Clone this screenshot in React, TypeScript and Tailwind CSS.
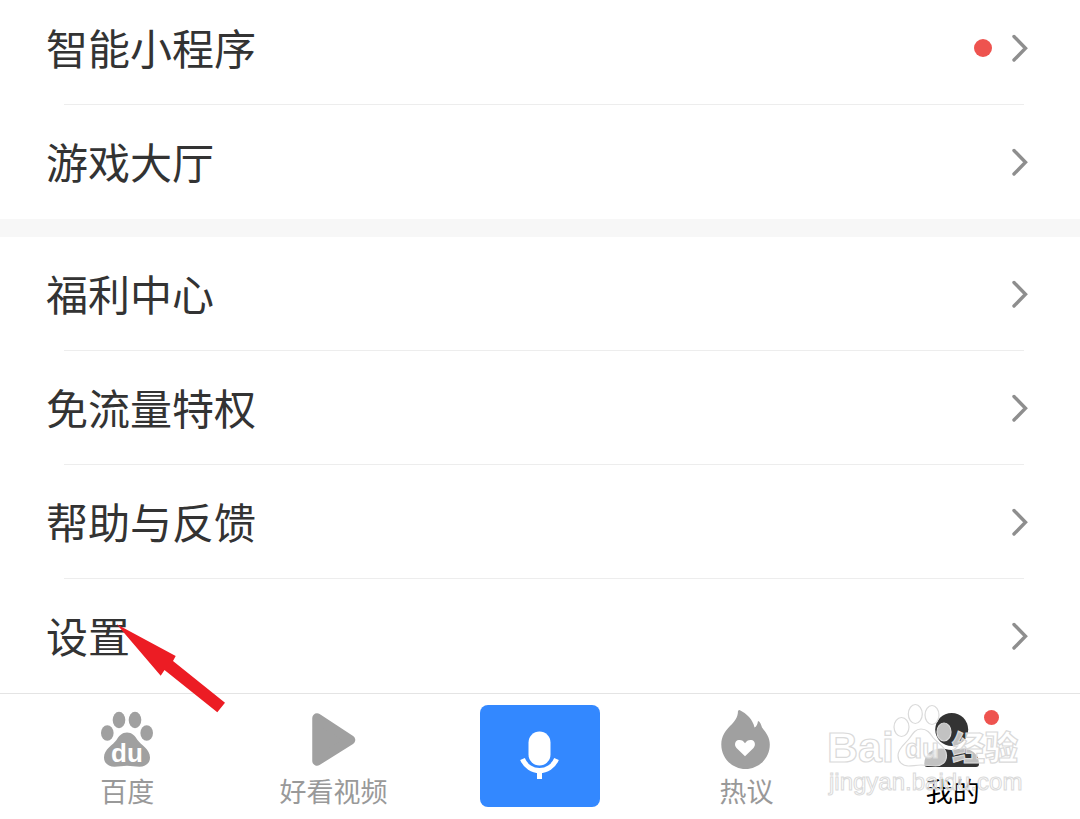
import type { ReactNode } from "react";

type MenuItem = {
  label: string;
  dot?: boolean;
  pointer?: boolean;
};

const menuGroups: MenuItem[][] = [
  [{ label: "智能小程序", dot: true }, { label: "游戏大厅" }],
  [
    { label: "福利中心" },
    { label: "免流量特权" },
    { label: "帮助与反馈" },
    { label: "设置", pointer: true },
  ],
];

function Chevron() {
  return (
    <svg className="h-7 w-4" viewBox="0 0 16 28" fill="none" aria-hidden="true">
      <path d="M2 2.5 13.5 14.3 2 26" stroke="#8e8e8e" strokeWidth="3.4" strokeLinecap="round" strokeLinejoin="miter" />
    </svg>
  );
}

function PointerArrow() {
  return (
    <svg
      className="pointer-events-none absolute left-[116px] top-[45px] z-10 h-[90px] w-[110px]"
      viewBox="0 0 110 90"
      aria-hidden="true"
    >
      <path d="M0.7 0.3 59.7 32 57 37 109 78.7 101.3 88.3 48.5 46 44.7 51.7Z" fill="#ec1c24" />
    </svg>
  );
}

function MenuRow({ item, last }: { item: MenuItem; last: boolean }) {
  return (
    <li className="relative flex h-[114px] flex-col">
      <a href="#" className="flex flex-1 items-center justify-between pl-[46px] pr-[52px]">
        <span className="pb-0.5 text-[42px] leading-[60px] text-[#333]">{item.label}</span>
        <span className="flex items-center gap-5">
          {item.dot && <span className="size-[18px] rounded-full bg-[#ee534f]" />}
          <Chevron />
        </span>
      </a>
      {!last && <div className="ml-16 mr-14 h-px bg-[#ededed]" />}
      {item.pointer && <PointerArrow />}
    </li>
  );
}

function PawIcon() {
  return (
    <svg className="size-[60px]" viewBox="0 0 60 60" aria-hidden="true">
      <g fill="#a0a0a0">
        <ellipse cx="10.3" cy="25" rx="6.3" ry="7.8" />
        <ellipse cx="22" cy="12" rx="6.3" ry="8.2" />
        <ellipse cx="38" cy="12" rx="6.3" ry="8.2" />
        <ellipse cx="49.7" cy="25" rx="6.3" ry="7.8" />
        <path d="M30 24.5c5 0 8 3.2 10.5 7.5 3.5 5 12.500 9 12.500 17.500 0 6-5 9.300-10.500 9.300-4.500 0-8-1-12.500-1s-8 1-12.500 1C12 58.800 7 55.500 7 49.500 7 41 16 37 19.500 32c2.500-4.300 5.500-7.500 10.500-7.500Z" />
      </g>
      <text x="30" y="54" textAnchor="middle" fill="#fff" className="font-['Liberation_Sans'] text-[26px] font-bold">
        du
      </text>
    </svg>
  );
}

function PlayIcon() {
  return (
    <svg className="size-[60px]" viewBox="0 0 60 60" aria-hidden="true">
      <path d="M13 10 46.500 32 13 53Z" fill="#a0a0a0" stroke="#a0a0a0" strokeWidth="9.500" strokeLinejoin="round" />
    </svg>
  );
}

function FlameIcon() {
  return (
    <svg className="size-[60px] overflow-visible" viewBox="0 0 60 60" aria-hidden="true">
      <path
        d="M23.500 2c7 3.500 13.500 9.500 15 17.500 1.800-.8 3-3 3.500-6.500 2 .5 3 3.500 4 6.500 4 5 7.800 10 7.800 17C53.800 50 43 61 29.500 61S5.300 50 5.300 36.500c0-8 3.700-13.500 8.700-18.500 4.500-4.500 8-8.500 8-15.300Z"
        fill="#a0a0a0"
      />
      <path d="M29 48.300 20.500 40c-2.500-2.800-1.800-7.500 2.300-8 2.700-.3 4.800 1 6.200 3.200 1.400-2.200 3.500-3.500 6.200-3.200 4.100.5 4.800 5.200 2.300 8Z" fill="#fff" />
    </svg>
  );
}

function PersonIcon() {
  return (
    <svg className="size-[60px]" viewBox="0 0 60 60" fill="#333" aria-hidden="true">
      <circle cx="28.700" cy="21.500" r="16.500" />
      <path d="M1.300 56c0-10 7.700-15.500 17-15.500 4 0 6 1.500 10.400 1.500s6.400-1.500 10.300-1.500c9.300 0 17 5.500 17 15.500 0 2-1 3-3 3H4.300c-2 0-3-1-3-3Z" />
    </svg>
  );
}

function MicIcon() {
  return (
    <svg className="size-[60px]" viewBox="0 0 60 60" fill="none" aria-hidden="true">
      <rect x="18.500" y="5.500" width="22" height="34" rx="11" fill="#fff" />
      <path d="M12.500 33c3 7.500 10 11.500 17 11.500s14-4 17-11.500" stroke="#fff" strokeWidth="5" />
      <path d="M29.500 44v9" stroke="#fff" strokeWidth="5" />
    </svg>
  );
}

function Tab({ label, icon, active, dot }: { label: string; icon: ReactNode; active?: boolean; dot?: boolean }) {
  return (
    <a href="#" className="relative flex flex-col items-center gap-1.5 pt-[14px]">
      {icon}
      <span className={active ? "text-[27px] leading-[34px] text-black" : "text-[27px] leading-[34px] text-[#999]"}>
        {label}
      </span>
      {dot && <span className="absolute left-1/2 top-4 ml-[31px] size-[15px] rounded-full bg-[#ee534f]" />}
    </a>
  );
}

function Watermark() {
  return (
    <svg
      className="pointer-events-none absolute right-[50px] top-[6px] h-[100px] w-[210px]"
      viewBox="0 0 210 100"
      fill="#fff"
      fillOpacity="0.7"
      stroke="#dadada"
      strokeWidth="1.2"
      aria-hidden="true"
    >
      <text x="7" y="62" className="font-['Liberation_Sans'] text-[43px] font-bold">
        Bai
      </text>
      <ellipse cx="81.500" cy="27" rx="7.500" ry="9.500" />
      <ellipse cx="95.300" cy="14" rx="7" ry="9.500" />
      <ellipse cx="112" cy="15" rx="7" ry="9.500" />
      <ellipse cx="124" cy="32" rx="7" ry="9" />
      <path d="M101 29c6 0 9 4 12 8.500 4 5.500 13.500 9.500 13.500 18 0 7-5 10.500-11 10.500-5 0-9-1-14.500-1s-8 1-12.500 1c-6 0-10.500-4-10.500-10.500 0-8 8-12 12-18 3-4.500 5.500-8.500 11-8.500Z" />
      <text x="85" y="58" className="font-['Liberation_Sans'] text-[28px] font-bold">
        du
      </text>
      <text x="132" y="60" className="text-[33px] font-black">
        经验
      </text>
      <text x="9" y="90" strokeWidth="1" className="font-['Liberation_Sans'] text-[24px]">
        jingyan.baidu.com
      </text>
    </svg>
  );
}

export default function App() {
  return (
    <div className="flex min-h-screen flex-col overflow-x-hidden bg-white font-['Noto_Sans_CJK_SC',sans-serif]">
      {/* list is scrolled, so the first row is slightly cut off at the top */}
      <main className="-mt-[9px] flex flex-1 flex-col gap-[18px] bg-[#f7f7f7]">
        {menuGroups.map((group, i) => (
          <ul key={i} className="bg-white">
            {group.map((item, j) => (
              <MenuRow key={item.label} item={item} last={j === group.length - 1} />
            ))}
          </ul>
        ))}
      </main>
      <nav className="relative grid h-[126px] grid-cols-5 border-t border-[#e4e4e4] bg-white px-6">
        <Tab label="百度" icon={<PawIcon />} />
        <Tab label="好看视频" icon={<PlayIcon />} />
        <button
          type="button"
          aria-label="语音搜索"
          className="mt-[11px] flex h-[102px] w-[120px] items-center justify-center justify-self-center rounded-lg bg-[#3388ff]"
        >
          <MicIcon />
        </button>
        <Tab label="热议" icon={<FlameIcon />} />
        <Tab label="我的" icon={<PersonIcon />} active dot />
        <Watermark />
      </nav>
    </div>
  );
}
